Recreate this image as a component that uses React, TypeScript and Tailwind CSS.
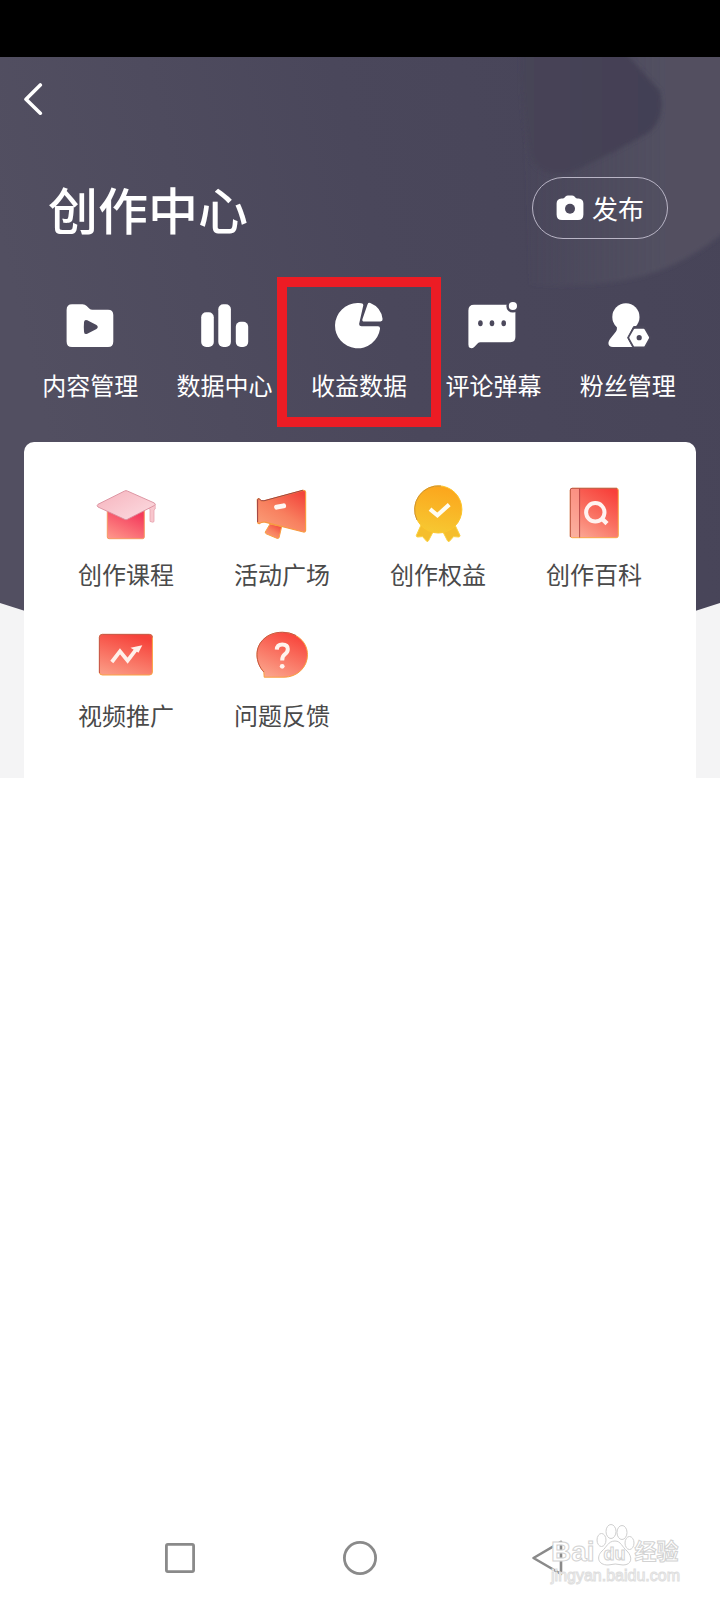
import type { ReactNode } from "react";

type Entry = { label: string; icon: ReactNode; marked?: boolean };

const HERO = "#4c495c";

function FolderIcon() {
  return (
    <svg className="size-12" viewBox="0 0 48 48" fill="#fff" aria-hidden="true">
      <path d="M6 2.3H16.5Q19 2.3 20.7 4L23.2 6.4Q24.6 7.7 26.5 7.7H42Q47.3 7.7 47.3 13V39.5Q47.3 45 42 45H6Q.6 45 .6 39.5V8Q.6 2.3 6 2.3Z" />
      <path d="M18 20.5Q18 17 21.3 18.3L30.5 23Q33 25 30.5 27L21.3 31.7Q18 33 18 29.5Q17.6 25 18 20.5Z" fill={HERO} />
    </svg>
  );
}

function BarsIcon() {
  return (
    <svg className="size-12" viewBox="0 0 48 48" fill="#fff" aria-hidden="true">
      <rect x="0.2" y="10.3" width="12.6" height="34.7" rx="5" />
      <rect x="17.3" y="2.3" width="12.6" height="42.7" rx="5" />
      <rect x="34.8" y="19.7" width="12.4" height="25.3" rx="5" />
    </svg>
  );
}

function PieIcon() {
  return (
    <svg className="size-12" viewBox="0 0 48 48" fill="#fff" aria-hidden="true">
      <path d="M26.2 1.2Q28.8 1.4 28.2 3.8L24.2 21.5Q23.8 24.3 26.6 24.3H43Q45.3 24.4 45 27A22.6 22.6 0 1 1 22.4 1.1Q24.5 1 26.2 1.2Z" />
      <path d="M32.6 2.2Q33.3.2 35.3 1A20 20 0 0 1 47.6 17Q47.8 19.4 45.5 19.5H29.5Q26.8 19.6 27.4 17.2Z" />
    </svg>
  );
}

function CommentIcon() {
  return (
    <svg className="size-12 overflow-visible" viewBox="0 0 48 48" fill="#fff" aria-hidden="true">
      <path d="M5 2.7H41.3Q46.4 2.7 46.4 8V35Q46.4 40.2 41.3 40.2H11.5Q9.7 40.2 8.6 41.5L5 45.2Q2.8 47 .8 45.8Q-.6 45 -.6 42.5V8.5Q-.6 2.7 5 2.7Z" />
      <circle cx="43.9" cy="4" r="6.6" fill={HERO} />
      <circle cx="43.9" cy="4" r="4.1" />
      <g fill={HERO}>
        <ellipse cx="11.4" cy="21.3" rx="2.3" ry="3" />
        <ellipse cx="23" cy="21.3" rx="2.3" ry="3" />
        <ellipse cx="34.7" cy="21.3" rx="2.3" ry="3" />
      </g>
    </svg>
  );
}

function FansIcon() {
  return (
    <svg className="size-12" viewBox="0 0 48 48" fill="#fff" aria-hidden="true">
      <circle cx="21.9" cy="14.9" r="13.6" />
      <path d="M12 22H31L33 45H9Q4.4 45 4.4 41Q4.6 39 6 37L12 29.5Q14 27 12 22Z" />
      <path d="M29.6 24.6H40.8L46.8 35.7L40.8 46.8H29.6L23.6 35.7Z" fill={HERO} stroke={HERO} strokeWidth="1" strokeLinejoin="round" />
      <path d="M30.8 28H39.6L43.9 35.7L39.6 43.4H30.8L26.5 35.7Z" stroke="#fff" strokeWidth="2.4" strokeLinejoin="round" />
      <circle cx="35.2" cy="35.7" r="2.6" fill={HERO} />
    </svg>
  );
}

function CapIcon() {
  return (
    <svg className="size-15" viewBox="0 0 60 60" aria-hidden="true">
      <defs>
        <linearGradient id="cap-body" x1="0" y1="1" x2="0.6" y2="0">
          <stop offset="0" stopColor="#ff9a8c" />
          <stop offset="1" stopColor="#f43a5c" />
        </linearGradient>
        <linearGradient id="cap-top" x1="0" y1="0" x2="1" y2="1">
          <stop offset="0" stopColor="#f6b3bd" />
          <stop offset="1" stopColor="#fcdde2" />
        </linearGradient>
      </defs>
      <path d="M11.3 25H48.3V53Q48.3 54.7 46.6 54.7H13Q11.3 54.7 11.3 53Z" fill="url(#cap-body)" stroke="#f59a62" />
      <path d="M50.5 24L54.4 20L59.2 20.5V25L58 26V37Q58 38.4 56.5 38.2L54 37.4V25Z" fill="#f8c6cd" stroke="#e6a3ae" strokeWidth="0.8" />
      <path d="M2 20.3L28.6 7Q30 6.2 31.4 7L58.4 19Q60 20.4 58.4 21.5L31.4 35.3Q30 36.2 28.6 35.3L2 23Q.2 21.7 2 20.3Z" fill="url(#cap-top)" stroke="#d98f9d" strokeWidth="0.9" />
    </svg>
  );
}

function HornIcon() {
  return (
    <svg className="size-15" viewBox="0 0 60 60" aria-hidden="true">
      <defs>
        <linearGradient id="horn" x1="0.1" y1="1" x2="0.8" y2="0">
          <stop offset="0" stopColor="#fba27c" />
          <stop offset="0.5" stopColor="#f8805f" />
          <stop offset="1" stopColor="#f3463c" />
        </linearGradient>
      </defs>
      <path d="M18 40L13.3 48Q13 49.2 14.2 49.8L25.2 54.4Q26.6 54.8 27.1 53.5L29.7 42.5Z" fill="url(#horn)" stroke="#f9a040" strokeWidth="1" />
      <path d="M5.3 15.6Q6 14.2 7.3 15Q9 17.3 12 16.8L50.8 6.3Q53.2 6 53.6 8V46.4Q53.3 48.4 51.4 48L13 38.2Q10 37.6 7.4 39.6Q5.7 39.8 5.6 38Z" fill="url(#horn)" stroke="#f79a40" strokeWidth="1.2" />
      <path d="M5.6 38V15.6Q6 14.2 7.3 15Q9 17.3 12 16.8L50.8 6.3" fill="none" stroke="#9c4048" strokeWidth="1" />
      <path d="M24.6 23.1L31.6 21.9" stroke="#fff6f2" strokeWidth="5" strokeLinecap="round" />
    </svg>
  );
}

function MedalIcon() {
  return (
    <svg className="size-15" viewBox="0 0 60 60" aria-hidden="true">
      <defs>
        <linearGradient id="medal" x1="0.4" y1="1" x2="0.6" y2="0">
          <stop offset="0" stopColor="#f6c832" />
          <stop offset="1" stopColor="#fca51c" />
        </linearGradient>
      </defs>
      <path d="M13 41L8.3 51.5Q8.2 53 9.8 53L14.5 52.6L18.7 57.3Q20 58 20.6 56.5L25 48ZM47 41L52 51.5Q52 53 50.4 53L45.6 52.6L41.4 57.3Q40 58 39.4 56.5L35 48Z" fill="#f5be2c" stroke="#fbd23f" />
      <circle cx="30.3" cy="25.4" r="23.6" fill="url(#medal)" stroke="#fcc62c" />
      <path d="M9 36A23.8 23.8 0 0 1 33 2" fill="none" stroke="#c98a32" strokeWidth="0.9" />
      <path d="M22 25.2L29.4 31.3L41.2 20.6" fill="none" stroke="#fffdf2" strokeWidth="4.2" />
    </svg>
  );
}

function BookIcon() {
  return (
    <svg className="size-15" viewBox="0 0 60 60" aria-hidden="true">
      <defs>
        <linearGradient id="book" x1="0.2" y1="1" x2="0.8" y2="0">
          <stop offset="0" stopColor="#fba794" />
          <stop offset="0.5" stopColor="#f96f60" />
          <stop offset="1" stopColor="#f8403a" />
        </linearGradient>
      </defs>
      <rect x="6.3" y="4.3" width="48" height="49.4" rx="2" fill="url(#book)" stroke="#f9a848" />
      <path d="M7 5H15V53H7Z" fill="#fbb3a4" fillOpacity="0.6" />
      <path d="M6.3 53V6Q6.3 4.3 8 4.3H53M15.6 4.5V53.5" fill="none" stroke="#b3474a" strokeWidth="0.9" />
      <circle cx="31.3" cy="28.3" r="9.2" fill="none" stroke="#fff3f0" strokeWidth="4" />
      <path d="M37.5 34.2L43 39.6" stroke="#fff3f0" strokeWidth="4.4" />
    </svg>
  );
}

function TrendIcon() {
  return (
    <svg className="size-15" viewBox="0 0 60 60" aria-hidden="true">
      <defs>
        <linearGradient id="trend" x1="0.2" y1="1" x2="0.6" y2="0">
          <stop offset="0" stopColor="#fb9a84" />
          <stop offset="1" stopColor="#f6423a" />
        </linearGradient>
      </defs>
      <rect x="3.4" y="9.4" width="53" height="40.6" rx="3" fill="url(#trend)" stroke="#f9a444" />
      <path d="M3.4 48V12.4Q3.4 9.4 6.4 9.4H53.4Q56.4 9.4 56.4 12.4" fill="none" stroke="#c0484a" strokeWidth="0.9" />
      <path d="M15.8 37L24 26.4L31.6 35.6L40 24.6" fill="none" stroke="#fff0ea" strokeWidth="3.8" />
      <path d="M34.5 22.8L46.3 20.2L42.5 27.8Z" fill="#fff0ea" />
    </svg>
  );
}

function QuestionIcon() {
  return (
    <svg className="size-15" viewBox="0 0 60 60" aria-hidden="true">
      <defs>
        <linearGradient id="question" x1="0.2" y1="1" x2="0.7" y2="0">
          <stop offset="0" stopColor="#fba58c" />
          <stop offset="1" stopColor="#f8433a" />
        </linearGradient>
      </defs>
      <path d="M12.2 52.2L11.8 46.5C7.5 42.5 5 36 5 29.7C5 17 15.5 7.3 30.3 7.3C44.8 7.3 55.5 17 55.5 29.7C55.5 42.5 45 52.2 32 52.2Z" fill="url(#question)" stroke="#f8a040" />
      <path d="M11.8 47C7.5 42.5 5 36 5 29.7C5 17 15.5 7.3 30.3 7.3Q38 7.3 44 10.5" fill="none" stroke="#c0484a" strokeWidth="0.9" />
      <path d="M24.8 24.6Q25 19.4 30.3 19.4Q35.8 19.4 35.8 24Q35.8 27 33 29.2Q30.2 31.2 30.2 35.4" fill="none" stroke="#fff3ee" strokeWidth="4" />
      <circle cx="30.2" cy="41.3" r="2.4" fill="#fff3ee" />
    </svg>
  );
}

const tools: Entry[] = [
  { label: "内容管理", icon: <FolderIcon /> },
  { label: "数据中心", icon: <BarsIcon /> },
  { label: "收益数据", icon: <PieIcon />, marked: true },
  { label: "评论弹幕", icon: <CommentIcon /> },
  { label: "粉丝管理", icon: <FansIcon /> },
];

const services: Entry[] = [
  { label: "创作课程", icon: <CapIcon /> },
  { label: "活动广场", icon: <HornIcon /> },
  { label: "创作权益", icon: <MedalIcon /> },
  { label: "创作百科", icon: <BookIcon /> },
  { label: "视频推广", icon: <TrendIcon /> },
  { label: "问题反馈", icon: <QuestionIcon /> },
];

function Backdrop() {
  return (
    <svg className="absolute inset-0 size-full" viewBox="0 0 720 721" preserveAspectRatio="none" aria-hidden="true">
      <defs>
        <linearGradient id="hero" x1="0" y1="0.3" x2="1" y2="0.1">
          <stop offset="0" stopColor="#524f61" />
          <stop offset="0.5" stopColor="#4a475b" />
          <stop offset="1" stopColor="#474458" />
        </linearGradient>
        <linearGradient id="sheen" x1="0" y1="0" x2="1" y2="0">
          <stop offset="0" stopColor="#525061" stopOpacity="0" />
          <stop offset="0.7" stopColor="#525061" />
        </linearGradient>
        <linearGradient id="play" x1="0" y1="0" x2="1" y2="0">
          <stop offset="0" stopColor="#474457" />
          <stop offset="1" stopColor="#434054" />
        </linearGradient>
        <filter id="soft">
          <feGaussianBlur stdDeviation="2" />
        </filter>
      </defs>
      <path d="M0 0H720V546Q360 666 0 546Z" fill="url(#hero)" />
      <path d="M520 -8H728V172Q700 196 668 210Q620 232 530 228Z" fill="url(#sheen)" filter="url(#soft)" />
      <path d="M522 -8H622L660 34Q666 62 648 76Q610 98 570 116Q540 122 530 100Q520 50 522 -8Z" fill="url(#play)" filter="url(#soft)" />
    </svg>
  );
}

function Watermark() {
  return (
    <div className="pointer-events-none absolute right-10 bottom-4 flex flex-col items-start font-['Liberation_Sans','Noto_Sans_CJK_SC',sans-serif] text-white" aria-hidden="true">
      <div className="flex items-end font-bold [-webkit-text-stroke:1px_#d2d2d2]">
        <span className="text-[28px] leading-8">Bai</span>
        <span className="relative flex h-11 w-10 items-end justify-center">
          <svg className="absolute inset-0 size-full" viewBox="0 0 40 44" fill="#fff" stroke="#cfcfcf">
            <ellipse cx="6.5" cy="16" rx="4.5" ry="6.5" />
            <ellipse cx="16" cy="7.5" rx="5" ry="7" />
            <ellipse cx="27" cy="8.5" rx="5" ry="7" />
            <ellipse cx="34.5" cy="19" rx="4.5" ry="6.5" />
            <path d="M20 17C26 17 27 23 32 27C38 33 37 41 28 41Q20 39 13 41C3 41 1 33 7 27C12 23 13 17 20 17Z" />
          </svg>
          <span className="relative text-[18px] leading-7">du</span>
        </span>
        <span className="text-[22px] leading-8">经验</span>
      </div>
      <span className="text-base leading-4 [-webkit-text-stroke:1px_#dedede]">jingyan.baidu.com</span>
    </div>
  );
}

export default function App() {
  return (
    <div className="flex min-h-screen flex-col bg-white font-['Noto_Sans_CJK_SC',sans-serif]">
      <div className="h-[57px] bg-black" />
      <main className="relative bg-[#f4f4f5]">
        <Backdrop />
        <div className="relative pt-[26px] text-white">
          <header>
            <button type="button" aria-label="返回" className="ml-[23px] block">
              <svg className="h-8 w-5" viewBox="0 0 20 32" fill="none" stroke="#fff" strokeWidth="3.6" strokeLinecap="round" strokeLinejoin="round" aria-hidden="true">
                <path d="M17.3 2L3 16.2L17.3 30.2" />
              </svg>
            </button>
            <div className="mt-[62px] flex items-center justify-between pr-[52px] pl-12">
              <h1 className="text-[50px] leading-[62px] font-medium">创作中心</h1>
              <button type="button" className="flex h-[62px] items-center gap-2 rounded-full border border-[#b9b5c6] px-[23px] text-[26px] leading-9">
                <svg className="size-7" viewBox="0 0 28 28" aria-hidden="true">
                  <path d="M9.5 2.5Q10.5 1.4 12 1.4H16Q17.5 1.4 18.5 2.5L19.6 3.8Q20.2 4.4 21.2 4.4H22.5Q27.4 4.8 27.4 9.5V20.5Q27.4 26 22 26H6Q.6 26 .6 20.5V9.5Q.6 4.8 5.5 4.4H6.8Q7.8 4.4 8.4 3.8Z" fill="#fff" />
                  <circle cx="14" cy="14.8" r="5" fill={HERO} />
                </svg>
                发布
              </button>
            </div>
          </header>
          <nav className="mt-[63px] grid grid-cols-5 pr-[25px] pl-[23px]">
            {tools.map((t) => (
              <button key={t.label} type="button" className="relative flex flex-col items-center gap-[17px] text-2xl leading-9 whitespace-nowrap">
                {t.icon}
                {t.label}
                {t.marked && <span className="absolute -inset-x-[15px] -top-[25px] -bottom-6 border-10 border-[#ec1c24]" />}
              </button>
            ))}
          </nav>
          <section className="mx-6 mt-[39px] grid grid-cols-4 gap-y-[33px] rounded-t-[10px] bg-white px-6 pt-[42px] pb-[45px] text-[#4a4a4a]">
            {services.map((s) => (
              <button key={s.label} type="button" className="flex flex-col items-center gap-3 text-2xl leading-9 whitespace-nowrap">
                {s.icon}
                {s.label}
              </button>
            ))}
          </section>
        </div>
      </main>
      <footer className="relative mt-auto grid h-[84px] grid-cols-3 place-items-center px-[90px]">
        <button type="button" aria-label="最近任务">
          <svg className="size-9" viewBox="0 0 36 36" fill="none" stroke="#8a8a8a" strokeWidth="2.8" aria-hidden="true">
            <rect x="4.4" y="4.4" width="27.2" height="27.2" rx="1.5" />
          </svg>
        </button>
        <button type="button" aria-label="主屏幕">
          <svg className="size-9" viewBox="0 0 36 36" fill="none" stroke="#8a8a8a" strokeWidth="2.8" aria-hidden="true">
            <circle cx="18" cy="18" r="15.6" />
          </svg>
        </button>
        <button type="button" aria-label="返回上一页">
          <svg className="h-9 w-12" viewBox="0 0 48 36" fill="none" stroke="#8a8a8a" strokeWidth="2.6" strokeLinejoin="round" aria-hidden="true">
            <path d="M45 1.8V34L17.5 18Z" />
          </svg>
        </button>
        <Watermark />
      </footer>
    </div>
  );
}
